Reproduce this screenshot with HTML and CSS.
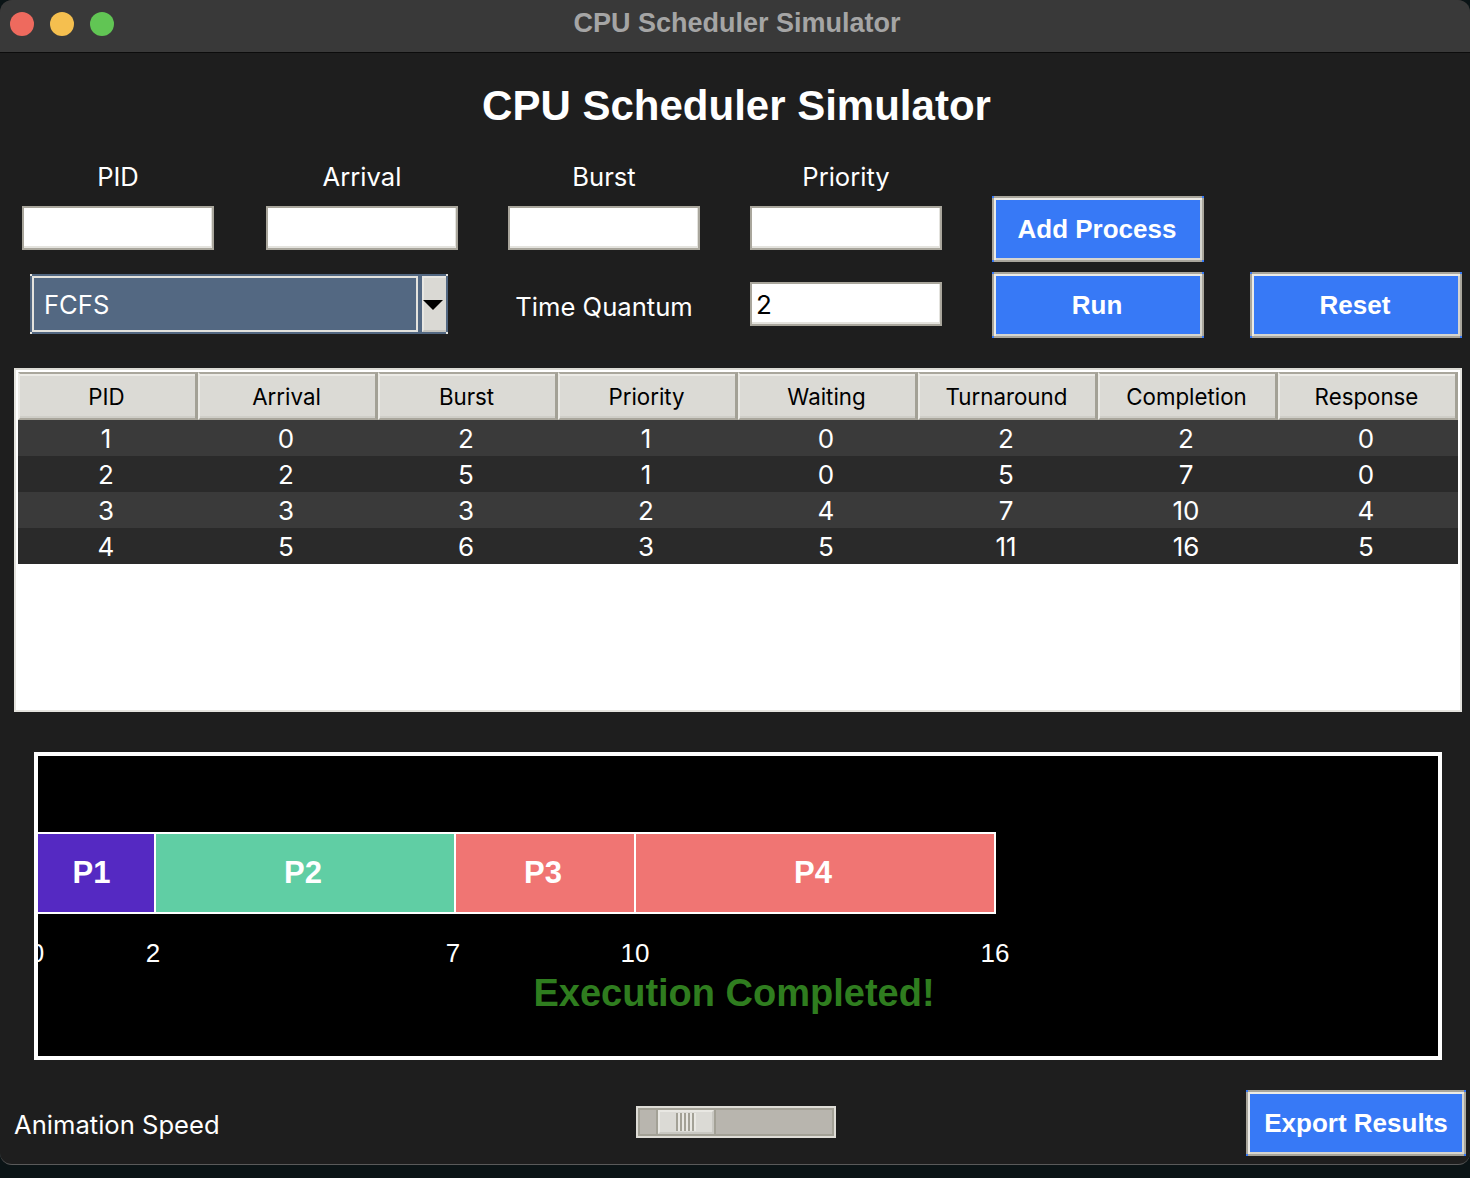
FILE: index.html
```html
<!DOCTYPE html>
<html lang="en">
<head>
    <meta charset="UTF-8">
    <title>CPU Scheduler Simulator</title>
    <link rel="stylesheet" href="styles.css">
</head>
<body>
<div class="window">
    <div class="titlebar">
        <div class="lights">
            <span class="light red"></span>
            <span class="light yellow"></span>
            <span class="light green"></span>
        </div>
        <div class="titlebar-text">CPU Scheduler Simulator</div>
    </div>

    <h1 class="heading">CPU Scheduler Simulator</h1>

    <div class="controls">
        <div class="field-label col1">PID</div>
        <div class="field-label col2">Arrival</div>
        <div class="field-label col3">Burst</div>
        <div class="field-label col4">Priority</div>

        <div class="entry col1 row2"><input type="text"></div>
        <div class="entry col2 row2"><input type="text"></div>
        <div class="entry col3 row2"><input type="text"></div>
        <div class="entry col4 row2"><input type="text"></div>
        <button class="btn btn-add">Add Process</button>

        <div class="combo">
            <div class="combo-value">FCFS</div>
            <div class="combo-arrow"><span class="arrow"></span></div>
        </div>
        <div class="field-label quantum-label">Time Quantum</div>
        <div class="entry quantum-entry"><input type="text" value="2"></div>
        <button class="btn btn-run">Run</button>
        <button class="btn btn-reset">Reset</button>
    </div>

    <div class="table-box">
        <table class="results">
            <thead>
                <tr>
                    <th>PID</th><th>Arrival</th><th>Burst</th><th>Priority</th>
                    <th>Waiting</th><th>Turnaround</th><th>Completion</th><th>Response</th>
                </tr>
            </thead>
            <tbody>
                <tr class="odd"><td>1</td><td>0</td><td>2</td><td>1</td><td>0</td><td>2</td><td>2</td><td>0</td></tr>
                <tr class="even"><td>2</td><td>2</td><td>5</td><td>1</td><td>0</td><td>5</td><td>7</td><td>0</td></tr>
                <tr class="odd"><td>3</td><td>3</td><td>3</td><td>2</td><td>4</td><td>7</td><td>10</td><td>4</td></tr>
                <tr class="even"><td>4</td><td>5</td><td>6</td><td>3</td><td>5</td><td>11</td><td>16</td><td>5</td></tr>
            </tbody>
        </table>
    </div>

    <div class="gantt">
        <div class="bars">
            <div class="bar" style="width:118px;background:#5529c2">P1</div>
            <div class="bar" style="width:301px;background:#60cea4">P2</div>
            <div class="bar" style="width:181px;background:#f07573">P3</div>
            <div class="bar" style="width:361px;background:#f07573">P4</div>
        </div>
        <span class="tick" style="left:-1px">0</span>
        <span class="tick" style="left:115px">2</span>
        <span class="tick" style="left:415px">7</span>
        <span class="tick" style="left:597px">10</span>
        <span class="tick" style="left:957px">16</span>
        <div class="done">Execution Completed!</div>
    </div>

    <div class="footer">
        <div class="speed-label">Animation Speed</div>
        <div class="slider">
            <div class="thumb">
                <span class="grip"></span>
            </div>
        </div>
        <button class="btn btn-export">Export Results</button>
    </div>
</div>
</body>
</html>
```

FILE: styles.css
```css
*{
    box-sizing: border-box;
}
body{
    margin: 0;
    height: 1178px;
    overflow: hidden;
    background: #0b1416;
    font-family: "Inter", "Liberation Sans", sans-serif;
    color: #fff;
}
.window{
    position: relative;
    height: 1165px;
    background: #1e1e1e;
    border-radius: 12px;
    border-bottom: 1px solid #5a5a5a;
    overflow: hidden;
}

/* title bar */
.titlebar{
    height: 53px;
    background: #393939;
    border-bottom: 1px solid #0c0c0c;
    display: flex;
    align-items: center;
    justify-content: center;
}
.lights{
    position: absolute;
    left: 10px;
    top: 12px;
    display: flex;
    gap: 16px;
}
.light{
    width: 24px;
    height: 24px;
    border-radius: 50%;
}
.red{
    background: #ee6a5e;
}
.yellow{
    background: #f5bf4f;
}
.green{
    background: #61c554;
}
.titlebar-text{
    font-family: "Liberation Sans", sans-serif;
    font-weight: bold;
    font-size: 27px;
    color: #a5a5a5;
    margin-top: -6px;
    padding-left: 4px;
}

.heading{
    margin: 0;
    height: 107px;
    padding: 26px 0 0 3px;
    text-align: center;
    font-family: "Liberation Sans", sans-serif;
    font-weight: bold;
    font-size: 42px;
    line-height: 54px;
}

/* inputs and buttons */
.controls{
    display: grid;
    grid-template-columns: 192px 52px 192px 50px 192px 50px 192px 50px 212px 46px 212px;
    grid-template-rows: 46px 56px 76px;
    margin-left: 22px;
    height: 208px;
}
.col1{
    grid-column: 1;
}
.col2{
    grid-column: 3;
}
.col3{
    grid-column: 5;
}
.col4{
    grid-column: 7;
}
.row2{
    grid-row: 2;
}
.field-label{
    font-size: 25.6px;
    text-align: center;
    align-self: center;
    padding-bottom: 14px;
}
.entry{
    position: relative;
    height: 44px;
    border: 2px solid #a9a69c;
    background: #fff;
}
.entry input{
    display: block;
    width: 100%;
    height: 100%;
    border: 0;
    border-right: 1px solid #e4e3de;
    border-bottom: 2px solid #e4e3de;
    outline: 0;
    padding: 2px 4px 0;
    font-family: "Inter", sans-serif;
    font-size: 26px;
    color: #000;
    background: #fff;
}
.btn{
    position: relative;
    padding: 0 2px 0 0;
    height: 66px;
    border: 2px solid #a9a69c;
    box-shadow: inset 2px 2px 0 #ecebe6, inset -2px -2px 0 #d6d5cf;
    background: #3779f6;
    color: #fff;
    font-family: "Liberation Sans", sans-serif;
    font-weight: bold;
    font-size: 26px;
}
.btn::after,
.combo::after{
    content: "";
    position: absolute;
    inset: -2px;
    background:
        linear-gradient(#3779f6, #3779f6) 0 0/2px 2px no-repeat,
        linear-gradient(#3779f6, #3779f6) 100% 0/2px 2px no-repeat,
        linear-gradient(#3779f6, #3779f6) 0 100%/2px 2px no-repeat,
        linear-gradient(#3779f6, #3779f6) 100% 100%/2px 2px no-repeat;
}
.btn-add{
    grid-column: 9;
    grid-row: 1 / 3;
    align-self: end;
}
.btn-run{
    grid-column: 9;
    grid-row: 3;
    margin-top: 10px;
}
.btn-reset{
    grid-column: 11;
    grid-row: 3;
    margin-top: 10px;
}
.combo{
    grid-column: 1 / 4;
    grid-row: 3;
    margin: 12px 10px 0 8px;
    height: 60px;
    width: 418px;
    display: flex;
    position: relative;
    background: #536882;
    border: 2px solid #536882;
}
.combo::after{
    background:
        linear-gradient(#e4e3de, #e4e3de) 0 0/2px 2px no-repeat,
        linear-gradient(#e4e3de, #e4e3de) 100% 0/2px 2px no-repeat,
        linear-gradient(#e4e3de, #e4e3de) 0 100%/2px 2px no-repeat,
        linear-gradient(#e4e3de, #e4e3de) 100% 100%/2px 2px no-repeat;
}
.combo-value{
    flex: 1;
    border: 2px solid #e4e3de;
    font-size: 25.6px;
    line-height: 54px;
    height: 56px;
    padding-left: 10px;
}
.combo-arrow{
    width: 24px;
    margin-left: 4px;
    padding-right: 4px;
    background: #dad9d4;
    border-top: 2px solid #e8e7e2;
    border-left: 2px solid #e8e7e2;
    border-bottom: 2px solid #c4c3bd;
    display: flex;
    align-items: center;
    justify-content: center;
}
.arrow{
    flex: none;
    width: 0;
    height: 0;
    margin-top: 2px;
    border-left: 10.5px solid transparent;
    border-right: 10.5px solid transparent;
    border-top: 10px solid #000;
}
.quantum-label{
    grid-column: 5;
    grid-row: 3;
    margin-top: 12px;
    padding-bottom: 0;
}
.quantum-entry{
    grid-column: 7;
    grid-row: 3;
    margin-top: 8px;
    align-self: center;
}

/* results table */
.table-box{
    margin: 0 8px 0 14px;
    height: 344px;
    background: #fff;
    border: 2px solid #e4e3de;
    border-top-color: #dcdbd5;
    padding: 2px 2px 0;
}
.results{
    width: 1440px;
    table-layout: fixed;
    border-collapse: separate;
    border-spacing: 0;
}
.results th{
    height: 48px;
    padding: 0 2px 0 0;
    background: #dbdad5;
    border: 2px solid #a9a69c;
    border-left-color: #ecebe6;
    border-right: 3px solid #a3a196;
    box-shadow: inset 0 2px 0 #ecebe6, inset 0 -2px 0 #cfcec8;
    color: #000;
    font-weight: normal;
    font-size: 22.3px;
}
.results td{
    height: 36px;
    padding: 0 4px 0 0;
    text-align: center;
    font-size: 26px;
    color: #fff;
}
.odd{
    background: #3a3a3a;
}
.even{
    background: #2a2a2a;
}

/* gantt chart */
.gantt{
    position: relative;
    margin: 40px 28px 0 34px;
    height: 308px;
    background: #000;
    border: 4px solid #fff;
    overflow: hidden;
}
.bars{
    display: flex;
    margin-top: 76px;
}
.bar{
    height: 82px;
    margin-right: -1px;
    padding-right: 4px;
    border: 2px solid #fff;
    border-left-width: 1px;
    font-family: "Liberation Sans", sans-serif;
    font-weight: bold;
    font-size: 31px;
    line-height: 78px;
    text-align: center;
}
.bar:first-child{
    border-left: 0;
    padding-right: 9px;
}
.tick{
    position: absolute;
    top: 182px;
    width: 0;
    display: flex;
    justify-content: center;
    white-space: nowrap;
    font-family: "Liberation Sans", sans-serif;
    font-size: 26px;
    line-height: 30px;
}
.done{
    position: absolute;
    left: 0;
    width: 1392px;
    top: 212px;
    text-align: center;
    font-family: "Liberation Sans", sans-serif;
    font-weight: bold;
    font-size: 38px;
    line-height: 50px;
    color: #2f7d1f;
}

/* bottom row */
.footer{
    position: relative;
    height: 104px;
    display: flex;
    padding-left: 14px;
}
.speed-label{
    width: 622px;
    margin-top: 46px;
    font-size: 25.6px;
    line-height: 38px;
}
.slider{
    width: 200px;
    height: 32px;
    margin-top: 46px;
    background: #b8b5ae;
    border: 2px solid #dedcd6;
    box-shadow: inset 0 0 0 2px #a3a196;
    padding: 2px 0 0 20px;
}
.thumb{
    width: 56px;
    height: 24px;
    background: #dbdad5;
    border: 2px solid #e9e8e3;
    border-right-color: #c9c8c2;
    border-bottom-color: #c9c8c2;
    box-shadow: -2px 0 0 #a3a196, 2px 0 0 #a3a196;
    display: flex;
    justify-content: center;
}
.grip{
    width: 20px;
    height: 18px;
    margin-top: 1px;
    background: repeating-linear-gradient(90deg, #a3a196 0 2px, #e9e8e3 2px 4px);
}
.btn-export{
    width: 220px;
    margin: 30px 0 0 410px;
    padding: 0;
}
```
